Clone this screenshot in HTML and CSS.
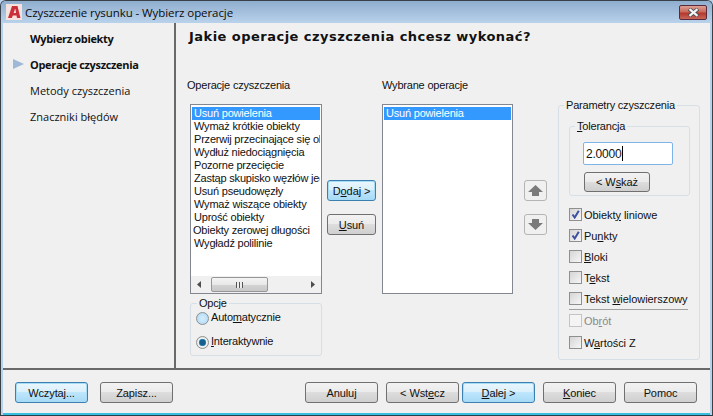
FILE: index.html
```html
<!DOCTYPE html>
<html lang="pl">
<head>
    <meta charset="UTF-8">
    <title>Czyszczenie rysunku - Wybierz operacje</title>
    <link rel="stylesheet" href="styles.css">
</head>
<body>
<div class="window">
  <div class="titlebar">
    <svg class="app-icon" width="16" height="16" viewBox="0 0 16 16">
      <rect width="16" height="16" fill="#f6e2dd"/>
      <path d="M2 14 L6 2 L11.5 2 L14.5 14 L11 14 L10.5 11.5 L6.8 11.5 L5.8 14 Z M7.6 9 L10 9 L9.4 5 L9 5 Z" fill="#c9303a" fill-rule="evenodd"/>
    </svg>
    <span class="title-text">Czyszczenie rysunku - Wybierz operacje</span>
    <div class="close-btn">
      <svg width="13" height="9" viewBox="0 0 13 9">
        <path d="M2 1 L11 8 M11 1 L2 8" stroke="#4c4f55" stroke-width="4"/>
        <path d="M2.5 1.2 L10.5 7.8 M10.5 1.2 L2.5 7.8" stroke="#f4f4f4" stroke-width="2.2"/>
      </svg>
    </div>
  </div>
  <div class="client">
    <div class="main">
      <!-- kroki kreatora -->
      <ul class="steps">
        <li class="step done">Wybierz obiekty</li>
        <li class="step current">Operacje czyszczenia</li>
        <li class="step">Metody czyszczenia</li>
        <li class="step">Znaczniki błędów</li>
      </ul>
      <div class="content">
        <h1 class="heading">Jakie operacje czyszczenia chcesz wykonać?</h1>
        <div class="panes">
          <div class="col-ops">
            <div class="col-label">Operacje czyszczenia</div>
            <div class="listbox listbox-ops">
              <ul class="items">
                <li class="selected">Usuń powielenia</li>
                <li>Wymaż krótkie obiekty</li>
                <li>Przerwij przecinające się obiekty</li>
                <li>Wydłuż niedociągnięcia</li>
                <li>Pozorne przecięcie</li>
                <li>Zastąp skupisko węzłów jednym</li>
                <li>Usuń pseudowęzły</li>
                <li>Wymaż wiszące obiekty</li>
                <li>Uprość obiekty</li>
                <li class="nudge">Obiekty zerowej długości</li>
                <li>Wygładź polilinie</li>
              </ul>
              <div class="scrollbar">
                <svg width="5" height="7" viewBox="0 0 5 7"><path d="M4 0 L0 3.5 L4 7 Z" fill="#4d4d4d"/></svg>
                <div class="thumb"><span class="grip"></span></div>
                <svg width="5" height="7" viewBox="0 0 5 7"><path d="M1 0 L5 3.5 L1 7 Z" fill="#4d4d4d"/></svg>
              </div>
            </div>
            <fieldset class="group group-options">
              <legend>Opcje</legend>
              <label class="radio"><span class="radio-dot"></span><span>Auto<u>m</u>atycznie</span></label>
              <label class="radio"><span class="radio-dot on"></span><span><u>I</u>nteraktywnie</span></label>
            </fieldset>
          </div>
          <div class="col-move">
            <button class="btn btn-side btn-default">D<u>o</u>daj &gt;</button>
            <button class="btn btn-side"><u>U</u>suń</button>
          </div>
          <div class="col-selected">
            <div class="col-label">Wybrane operacje</div>
            <div class="listbox listbox-selected">
              <ul class="items">
                <li class="selected">Usuń powielenia</li>
              </ul>
            </div>
          </div>
          <div class="col-order">
            <button class="arrow-btn">
              <svg width="15" height="11" viewBox="0 0 15 11"><path d="M7.5 0 L15 7 L11 7 L11 11 L4 11 L4 7 L0 7 Z" fill="#7b7b7b"/></svg>
            </button>
            <button class="arrow-btn">
              <svg width="15" height="11" viewBox="0 0 15 11"><path d="M7.5 11 L15 4 L11 4 L11 0 L4 0 L4 4 L0 4 Z" fill="#7b7b7b"/></svg>
            </button>
          </div>
          <fieldset class="group group-params">
            <legend>Parametry czyszczenia</legend>
            <fieldset class="group group-tolerance">
              <legend><u>T</u>olerancja</legend>
              <div class="textbox">2.0000<span class="caret"></span></div>
              <button class="btn btn-pick">&lt; W<u>s</u>każ</button>
            </fieldset>
            <div class="checks">
              <label class="check"><span class="box"><svg width="9" height="9" viewBox="0 0 9 9"><path d="M1.5 4.5 L3.7 7.5 L7.8 0.8" fill="none" stroke="#3d4f9f" stroke-width="2"/></svg></span><span>Obiekt<u>y</u> liniowe</span></label>
              <label class="check"><span class="box"><svg width="9" height="9" viewBox="0 0 9 9"><path d="M1.5 4.5 L3.7 7.5 L7.8 0.8" fill="none" stroke="#3d4f9f" stroke-width="2"/></svg></span><span>Pu<u>n</u>kty</span></label>
              <label class="check"><span class="box"></span><span><u>B</u>loki</span></label>
              <label class="check"><span class="box"></span><span>T<u>e</u>kst</span></label>
              <label class="check"><span class="box"></span><span>Tekst <u>w</u>ielowierszowy</span></label>
              <div class="check-sep"></div>
              <label class="check disabled"><span class="box"></span><span>Ob<u>r</u>ót</span></label>
              <label class="check check-last"><span class="box"></span><span>W<u>a</u>rtości Z</span></label>
            </div>
          </fieldset>
        </div>
      </div>
    </div>
    <div class="footer">
      <button class="btn btn-default">Wczytaj...</button>
      <button class="btn btn-save">Zapisz...</button>
      <button class="btn btn-cancel">Anuluj</button>
      <button class="btn btn-back">&lt; Wst<u>e</u>cz</button>
      <button class="btn btn-default btn-next"><u>D</u>alej &gt;</button>
      <button class="btn btn-end"><u>K</u>oniec</button>
      <button class="btn btn-end">Pomoc</button>
    </div>
  </div>
</div>
</body>
</html>
```
FILE: styles.css
```css
* {
    box-sizing: border-box;
}
html, body {
    margin: 0;
    padding: 0;
}
body {
    width: 713px;
    height: 416px;
    overflow: hidden;
    font-family: 'Liberation Sans', Arial, sans-serif;
    font-size: 11px;
    letter-spacing: -0.2px;
    color: #111;
    background: #b9d1ea;
}
ul {
    margin: 0;
    padding: 0;
    list-style: none;
}
.window {
    width: 713px;
    height: 416px;
    display: flex;
    flex-direction: column;
    border: 1px solid #3a4047;
    border-bottom-color: #24404c;
    border-radius: 6px 6px 0 0;
    background: #b9d1ea;
    overflow: hidden;
}
.titlebar {
    height: 22px;
    flex: none;
    display: flex;
    align-items: center;
    padding: 0 5px;
    background: linear-gradient(#8fadcd, #b9d2ec);
}
.app-icon {
    flex: none;
}
.title-text {
    margin-left: 3px;
    font-family: 'Open Sans', sans-serif;
    font-size: 11.5px;
    letter-spacing: -0.08px;
    color: #0c0c0c;
}
.close-btn {
    margin-left: auto;
    width: 28px;
    height: 15px;
    display: flex;
    align-items: center;
    justify-content: center;
    border: 1px solid #5a2a3a;
    border-radius: 2px;
    background: linear-gradient(#dc9f93 0%, #c96a5c 45%, #b5372c 55%, #c6675a 100%);
}
.client {
    flex: 1;
    min-height: 0;
    margin: 0 2px;
    display: flex;
    flex-direction: column;
    background: #f0f0f0;
    box-shadow: 0 2px 0 #38bfe0;
    margin-bottom: 2px;
}
.main {
    height: 347px;
    flex: none;
    display: flex;
    border-bottom: 2px solid #696969;
}
.steps {
    width: 173px;
    flex: none;
    padding-top: 9px;
    border-right: 2px solid #696969;
    font-family: 'Open Sans', sans-serif;
    letter-spacing: 0;
}
.step {
    height: 26px;
    line-height: 14px;
    padding-left: 27px;
    position: relative;
    font-size: 11px;
}
.step.done, .step.current {
    font-weight: bold;
    letter-spacing: -0.33px;
}
.step.current::before {
    content: "";
    position: absolute;
    left: 10px;
    top: 1px;
    border-left: 11px solid #9fb8d8;
    border-top: 5.5px solid transparent;
    border-bottom: 5.5px solid transparent;
}
.content {
    flex: 1;
    min-width: 0;
    padding: 6px 0 0 11px;
}
.heading {
    margin: 0 0 0 2px;
    height: 18px;
    font-family: 'DejaVu Sans', sans-serif;
    font-size: 13px;
    letter-spacing: 0.47px;
    line-height: 16px;
    font-weight: bold;
}
.panes {
    margin-top: 31px;
    display: flex;
    align-items: flex-start;
}
.col-label {
    height: 14px;
    padding-top: 1px;
    line-height: 13px;
}
.col-ops {
    width: 140px;
    flex: none;
}
.listbox {
    margin-top: 12px;
    border: 1px solid #828790;
    background: #fff;
    height: 190px;
    overflow: hidden;
}
.listbox-ops {
    margin-left: 3px;
    width: 132px;
    display: flex;
    flex-direction: column;
}
.items {
    flex: 1;
    padding: 2px 1px;
}
.items li {
    height: 13px;
    line-height: 13px;
    padding-left: 2px;
    white-space: nowrap;
    overflow: hidden;
}
.items li.nudge {
    padding-left: 1px;
}
.items li.selected {
    background: #3399ff;
    color: #fff;
}
.scrollbar {
    height: 17px;
    flex: none;
    display: flex;
    align-items: center;
    justify-content: space-between;
    padding: 0 6px;
    background: #f0f0f0;
}
.thumb {
    width: 57px;
    height: 15px;
    margin-right: 38px;
    margin-left: 4px;
    display: flex;
    align-items: center;
    justify-content: center;
    border: 1px solid #979797;
    border-radius: 2px;
    background: linear-gradient(#f4f4f4 0%, #e8e8e8 50%, #d4d4d4 51%, #c8c8c8 100%);
}
.grip {
    width: 7px;
    height: 6px;
    background: repeating-linear-gradient(90deg, #555 0 1px, #eee 1px 3px);
}
.group {
    margin: 0;
    min-width: 0;
    padding: 0;
    border: 1px solid #d5dfe5;
    border-radius: 3px;
}
.group legend {
    padding: 0 2px;
    line-height: 13px;
}
.group-options {
    margin: 3px 0 0 3px;
    width: 132px;
    height: 59px;
    padding: 1px 0 0 5px;
}
.group-options legend {
    margin-left: 1px;
}
.radio {
    height: 24px;
    display: flex;
    align-items: flex-start;
    gap: 2px;
    line-height: 13px;
}
.radio-dot {
    width: 13px;
    height: 13px;
    margin-top: 1px;
    border: 1px solid #8e8f8f;
    border-radius: 50%;
    background: radial-gradient(circle, #cfeafc 20%, #a9d7f5 100%);
}
.radio-dot.on {
    background: radial-gradient(circle, #14608f 0 35%, #4f9fca 45%, #f3f3f3 52%, #d8d8d8 100%);
}
.col-move {
    width: 55px;
    flex: none;
    padding-top: 102px;
    display: flex;
    flex-direction: column;
    gap: 13px;
}
.btn {
    height: 21px;
    width: 73px;
    padding: 0;
    font: inherit;
    letter-spacing: -0.1px;
    color: #111;
    border: 1px solid #707070;
    border-radius: 3px;
    background: linear-gradient(#f2f2f2 0%, #ebebeb 48%, #dddddd 50%, #cfcfcf 100%);
}
.btn-side {
    width: 49px;
}
.btn-default {
    border-color: #3c7fb1;
    box-shadow: inset 0 0 0 1px #a6dcf5;
    background: linear-gradient(#eaf6fd 0%, #d9f0fc 48%, #bee6fd 50%, #a7d9f5 100%);
}
.col-selected {
    width: 142px;
    flex: none;
}
.listbox-selected {
    width: 131px;
}
.col-order {
    width: 34px;
    flex: none;
    padding-top: 102px;
    display: flex;
    flex-direction: column;
    gap: 13px;
}
.arrow-btn {
    width: 23px;
    height: 21px;
    padding: 0;
    display: flex;
    align-items: center;
    justify-content: center;
    border: 1px solid #b5b5b5;
    border-radius: 3px;
    background: #f0f0f0;
}
.group-params {
    width: 142px;
    height: 261px;
    margin-top: 21px;
    margin-left: 0;
    padding: 0 0 0 10px;
}
.group-params > legend {
    margin-left: -5px;
}
.group-tolerance {
    width: 121px;
    height: 76px;
    margin-top: 8px;
    padding: 9px 0 0 13px;
}
.group-tolerance legend {
    margin-left: -8px;
}
.textbox {
    width: 90px;
    height: 23px;
    padding-left: 2px;
    display: flex;
    align-items: center;
    border: 1px solid #7eb4ea;
    border-radius: 2px;
    background: #fff;
    font-size: 12px;
}
.caret {
    width: 1px;
    height: 15px;
    background: #000;
}
.btn-pick {
    width: 66px;
    height: 20px;
    margin: 7px 0 0 1px;
    display: block;
}
.checks {
    margin-top: 8px;
    letter-spacing: -0.05px;
}
.check {
    height: 21px;
    display: flex;
    align-items: center;
    gap: 2px;
}
.check-last {
    margin-top: 1px;
}
.box {
    width: 13px;
    height: 13px;
    flex: none;
    display: flex;
    align-items: center;
    justify-content: center;
    border: 1px solid #8e8f8f;
    background: linear-gradient(135deg, #d5d5d5, #f6f6f6);
}
.check-sep {
    width: 119px;
    height: 1px;
    background: #a0a0a0;
}
.check.disabled {
    color: #8a8a8a;
}
.check.disabled .box {
    border-color: #c4c4c4;
    background: #f4f4f4;
}
.footer {
    flex: 1;
    display: flex;
    align-items: flex-start;
    padding: 12px 0 0 12px;
}
.btn-save {
    margin-left: 12px;
}
.btn-cancel {
    margin-left: 132px;
}
.btn-back {
    margin-left: 8px;
}
.btn-next {
    margin-left: 3px;
}
.btn-end {
    margin-left: 8px;
}
```
